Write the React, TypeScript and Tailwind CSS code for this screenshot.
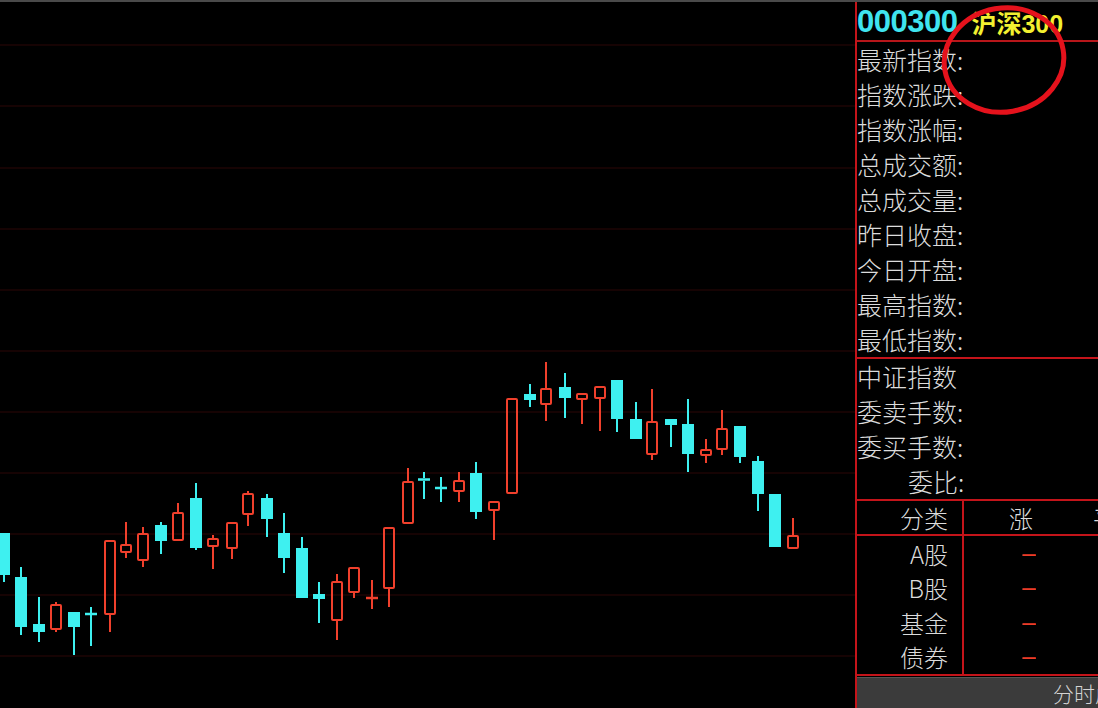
type Candle = [number, number, number, number, number, 'c' | 'r'];

// cx, body top, body bottom, high, low, colour (page coordinates)
const candles: Candle[] = [
  [4, 533, 575, 533, 582, 'c'],
  [21, 577, 627, 567, 635, 'c'],
  [39, 624, 632, 597, 642, 'c'],
  [56, 604, 630, 602, 632, 'r'],
  [74, 612, 627, 612, 655, 'c'],
  [91, 613, 615, 607, 646, 'c'],
  [110, 540, 615, 540, 632, 'r'],
  [126, 544, 553, 522, 558, 'r'],
  [143, 533, 561, 527, 567, 'r'],
  [161, 525, 541, 522, 554, 'c'],
  [178, 512, 541, 503, 541, 'r'],
  [196, 498, 548, 483, 550, 'c'],
  [213, 538, 547, 535, 569, 'r'],
  [232, 522, 549, 522, 559, 'r'],
  [248, 493, 515, 491, 526, 'r'],
  [267, 498, 519, 494, 537, 'c'],
  [284, 533, 558, 513, 573, 'c'],
  [302, 548, 598, 537, 598, 'c'],
  [319, 594, 599, 582, 623, 'c'],
  [337, 581, 621, 574, 640, 'r'],
  [354, 567, 593, 567, 598, 'r'],
  [372, 597, 599, 580, 609, 'r'],
  [389, 527, 589, 527, 607, 'r'],
  [408, 481, 524, 468, 524, 'r'],
  [424, 478, 481, 472, 499, 'c'],
  [441, 487, 489, 477, 502, 'c'],
  [459, 480, 492, 472, 502, 'r'],
  [476, 473, 512, 462, 519, 'c'],
  [494, 501, 511, 501, 540, 'r'],
  [512, 398, 494, 398, 494, 'r'],
  [530, 394, 400, 384, 407, 'c'],
  [546, 388, 405, 362, 421, 'r'],
  [565, 387, 398, 373, 418, 'c'],
  [582, 393, 400, 393, 424, 'r'],
  [600, 386, 399, 386, 431, 'r'],
  [617, 380, 419, 380, 432, 'c'],
  [636, 419, 439, 402, 439, 'c'],
  [652, 421, 455, 389, 460, 'r'],
  [671, 419, 425, 419, 447, 'c'],
  [688, 424, 454, 399, 472, 'c'],
  [706, 449, 456, 439, 463, 'r'],
  [722, 428, 450, 410, 455, 'r'],
  [740, 426, 457, 426, 463, 'c'],
  [758, 461, 494, 456, 511, 'c'],
  [775, 494, 547, 494, 547, 'c'],
  [793, 535, 549, 518, 549, 'r'],
];

const gridY = [45, 106, 168, 229, 290, 351, 412, 473, 534, 595, 656];

const RED = '#f0402c';
const CYAN = '#3ef0f0';

const KChart = () => (
  <svg width="855" height="706" viewBox="0 2 855 706" className="block">
    {gridY.map((y) => (
      <line key={y} x1="0" x2="855" y1={y} y2={y} stroke="#2c0606" strokeWidth="1" />
    ))}
    {candles.map(([cx, top, bot, hi, lo, col], i) => {
      const color = col === 'c' ? CYAN : RED;
      const flat = bot - top <= 3;
      return (
        <g key={i}>
          {hi < top && <line x1={cx} x2={cx} y1={hi} y2={top} stroke={color} strokeWidth="2" />}
          {lo > bot && <line x1={cx} x2={cx} y1={bot} y2={lo} stroke={color} strokeWidth="2" />}
          {flat ? (
            <line x1={cx - 6} x2={cx + 6} y1={(top + bot) / 2} y2={(top + bot) / 2} stroke={color} strokeWidth="2.5" />
          ) : col === 'c' ? (
            <rect x={cx - 6} y={top} width="12" height={bot - top} fill={color} />
          ) : (
            <rect x={cx - 5} y={top + 1} width="10" height={bot - top - 2} fill="none" stroke={color} strokeWidth="2" rx="1" />
          )}
        </g>
      );
    })}
  </svg>
);

const infoRows = ['最新指数:', '指数涨跌:', '指数涨幅:', '总成交额:', '总成交量:', '昨日收盘:', '今日开盘:', '最高指数:', '最低指数:'];
const tableRows = ['A股', 'B股', '基金', '债券'];
const rowH = ['h-[35px]', 'h-[34px]', 'h-[35px]', 'h-[34px]'];

export default function App() {
  return (
    <div className="w-[1098px] h-[708px] bg-black overflow-hidden flex flex-col font-['Noto_Sans_CJK_SC',sans-serif]">
      <div className="h-[2px] bg-[#4a4a4a]" />
      <div className="flex flex-1 min-h-0">
        <div className="w-[855px] h-full shrink-0">
          <KChart />
        </div>

        <aside className="relative flex-1 flex flex-col border-l-2 border-[#c4141a] text-[#dcdcdc] font-light overflow-hidden">
          {/* header */}
          <div className="h-[40px] shrink-0 border-b-2 border-[#b8161a] flex items-end pb-[3px] whitespace-nowrap leading-none">
            <span className="font-['Liberation_Sans',sans-serif] font-bold text-[31px] text-[#3fe4ef] tracking-[-0.5px]">000300</span>
            <span className="ml-[14px] font-bold text-[25px] text-[#f2f030]">
              沪深<span className="font-['Liberation_Sans',sans-serif]">300</span>
            </span>
          </div>

          {/* quote info */}
          <div className="shrink-0 border-b-2 border-[#c4141a]">
            {infoRows.map((t) => (
              <div key={t} className="h-[35px] flex items-center text-[25px] leading-none whitespace-nowrap">
                {t}
              </div>
            ))}
          </div>

          <div className="shrink-0 border-b-2 border-[#c4141a] text-[25px] leading-none whitespace-nowrap">
            <div className="h-[35px] flex items-center">中证指数</div>
            <div className="h-[35px] flex items-center">委卖手数:</div>
            <div className="h-[35px] flex items-center">委买手数:</div>
            <div className="h-[35px] flex items-center">
              <span className="w-[101px] text-right">委比</span>:
            </div>
          </div>

          {/* classification table */}
          <div className="h-[35px] shrink-0 flex border-b-2 border-[#c4141a] text-[24px] leading-none whitespace-nowrap">
            <div className="w-[107px] shrink-0 border-r-2 border-[#c4141a] flex items-center justify-end pr-[14px]">分类</div>
            <div className="w-[114px] shrink-0 flex items-center justify-center">涨</div>
            <div className="shrink-0 flex items-center pl-[15px]">平</div>
          </div>
          <div className="shrink-0 flex border-b-2 border-[#c4141a] text-[24px] leading-none whitespace-nowrap">
            <div className="w-[107px] shrink-0 border-r-2 border-[#c4141a]">
              {tableRows.map((t, i) => (
                <div key={t} className={`${rowH[i]} flex items-center justify-end pr-[14px]`}>{t}</div>
              ))}
            </div>
            <div className="w-[114px] shrink-0">
              {tableRows.map((t, i) => (
                <div key={t} className={`${rowH[i]} flex items-center justify-center pl-[16px]`}>
                  <span className="font-['Liberation_Sans',sans-serif] font-bold text-[18px] text-[#ec3c28] scale-x-75 inline-block">—</span>
                </div>
              ))}
            </div>
          </div>

          <div className="flex-1 mt-[1px] bg-[#3b3b3b] border-t border-[#555] flex items-center pl-[196px] text-[21px] text-[#d4d4d4] whitespace-nowrap">
            分时成交
          </div>

          {/* hand-drawn annotation */}
          <svg className="absolute left-0 top-0 pointer-events-none" width="243" height="130" viewBox="0 0 243 130">
            <ellipse cx="147" cy="58" rx="60" ry="52" fill="none" stroke="#e5121c" strokeWidth="5" transform="rotate(-10 147 58)" />
          </svg>
        </aside>
      </div>
    </div>
  );
}
